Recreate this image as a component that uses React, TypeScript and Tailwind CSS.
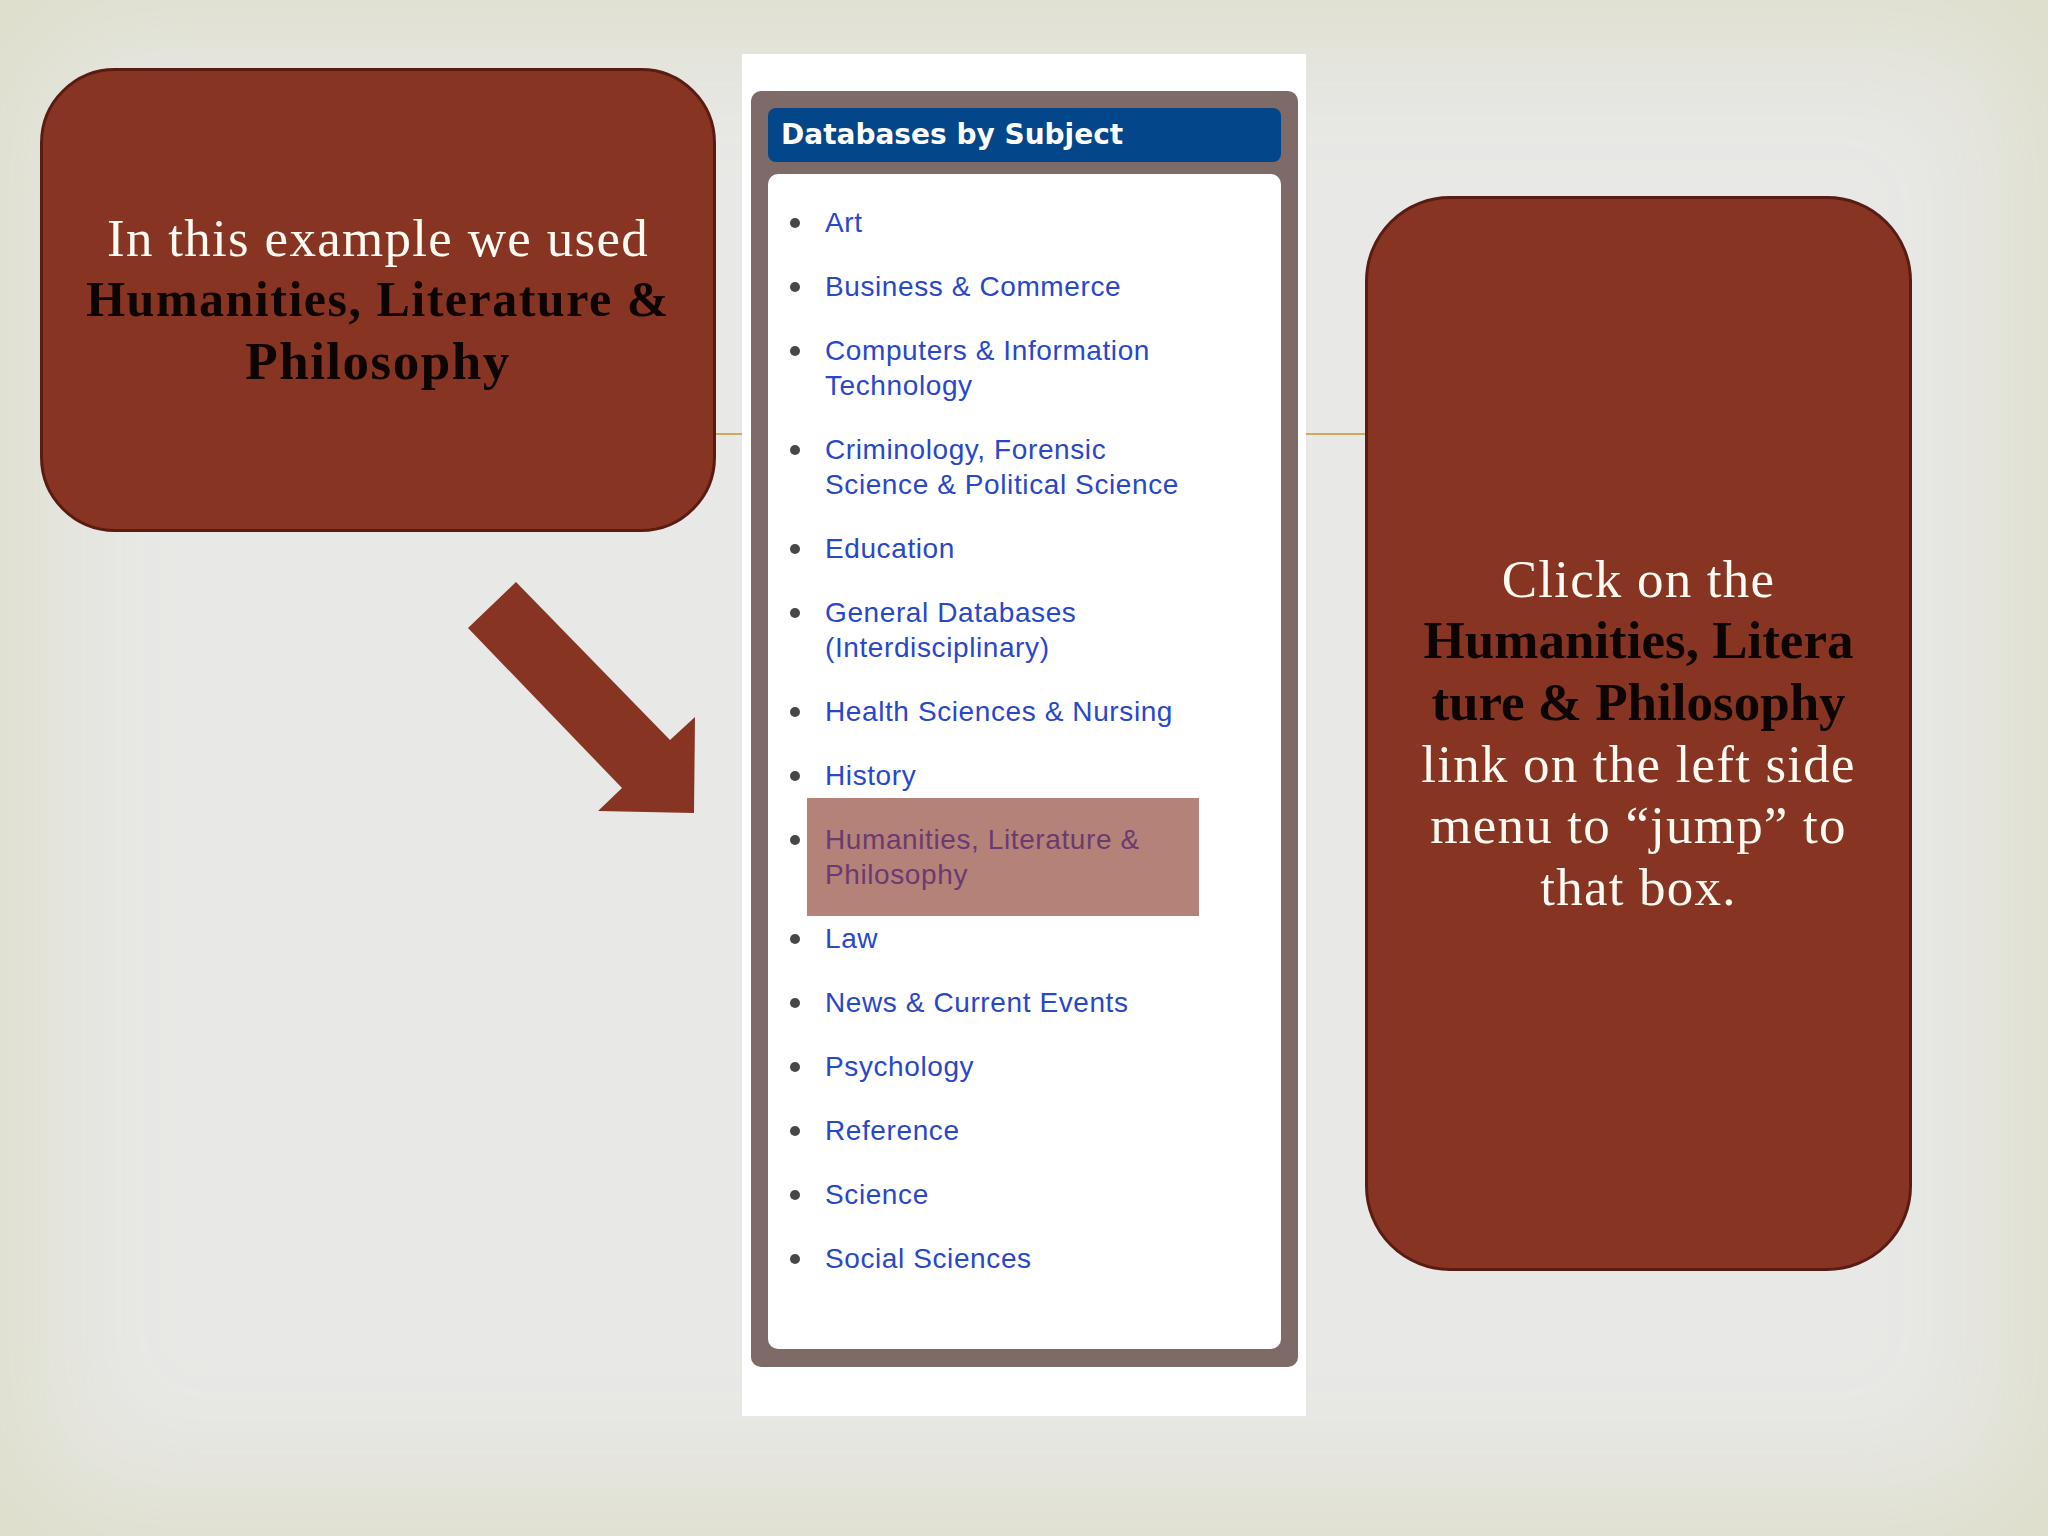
import React from 'react'

interface ISubject {
    lines: string[];
    active?: boolean;
}

const subjects: ISubject[] = [
    { lines: ['Art'] },
    { lines: ['Business & Commerce'] },
    { lines: ['Computers & Information', 'Technology'] },
    { lines: ['Criminology, Forensic', 'Science & Political Science'] },
    { lines: ['Education'] },
    { lines: ['General Databases', '(Interdisciplinary)'] },
    { lines: ['Health Sciences & Nursing'] },
    { lines: ['History'] },
    { lines: ['Humanities, Literature &', 'Philosophy'], active: true },
    { lines: ['Law'] },
    { lines: ['News & Current Events'] },
    { lines: ['Psychology'] },
    { lines: ['Reference'] },
    { lines: ['Science'] },
    { lines: ['Social Sciences'] },
]

const SubjectMenu = () => {
    return (
        <div className='mt-[54px] flex h-[1362px] w-[564px] flex-col bg-white pt-[37px] pl-[9px] pr-[8px] pb-[49px]'>
            <div className='flex flex-1 flex-col gap-[12px] rounded-[10px] bg-[#7e6a67] px-[17px] pt-[17px] pb-[18px]'>
                <div className="flex h-[54px] items-center rounded-[8px] bg-[#03468a] pl-[13px] font-['DejaVu_Sans',sans-serif] text-[28px] font-bold text-white">
                    Databases by Subject
                </div>
                <div className='flex-1 rounded-[10px] bg-white pt-[31px]'>
                    <ul className="flex flex-col gap-[29px] font-['Liberation_Sans',Arial,sans-serif]">
                        {subjects.map((item, idx) => (
                            <li key={idx} className='flex'>
                                <span className='flex h-[35px] w-[57px] shrink-0 items-center pl-[22px]'>
                                    <span className='h-[10px] w-[10px] rounded-full bg-[#474747]'></span>
                                </span>
                                <div className={item.active
                                    ? 'relative -my-[24px] -ml-[18px] w-[392px] whitespace-nowrap bg-[#b5827a] py-[24px] pl-[18px] text-[28px] leading-[35px] tracking-[0.6px] text-[#6b3a6e]'
                                    : 'whitespace-nowrap text-[28px] leading-[35px] tracking-[0.6px] text-[#2847c9]'}>
                                    {item.lines.map((line, i) => (
                                        <div key={i}>{line}</div>
                                    ))}
                                </div>
                            </li>
                        ))}
                    </ul>
                </div>
            </div>
        </div>
    )
}

export default function App() {
    return (
        <div className='relative h-[1536px] w-[2048px] overflow-hidden bg-[#e8e8e6] shadow-[inset_0_0_140px_30px_#dcddc8]'>
            <div className="flex items-start pl-[40px] font-['Liberation_Serif',serif]">
                {/* left note + arrow */}
                <div className='mt-[68px] flex w-[676px] flex-col'>
                    <div className='flex h-[464px] flex-col items-center justify-center rounded-[75px] border-[3px] border-[#5a1c12] bg-[#873422] text-center'>
                        <div className='text-[53px] leading-[61.5px] tracking-[1.3px] text-[#fffaf2]'>In this example we used</div>
                        <div className='text-[50px] font-bold leading-[61.5px] tracking-[1.5px] text-[#0c0504]'>Humanities, Literature &amp;</div>
                        <div className='text-[53px] font-bold leading-[61.5px] tracking-[1.5px] text-[#0c0504]'>Philosophy</div>
                    </div>
                    <svg className='ml-[420px] mt-[43px] block' width='240' height='245' viewBox='460 575 240 245'>
                        <polygon points='468,628 516,582 670,740 695,717 694,813 598,811 622,788' fill='#873422' />
                    </svg>
                </div>

                <div className='mt-[433px] h-[2px] w-[26px] bg-[#d6a65a]'></div>

                <SubjectMenu />

                <div className='mt-[433px] h-[2px] w-[59px] bg-[#d6a65a]'></div>

                {/* right note */}
                <div className='mt-[196px] flex h-[1075px] w-[547px] flex-col items-center justify-center rounded-[85px] border-[3px] border-[#5a1c12] bg-[#873422] text-center text-[53px] leading-[61.6px]'>
                    <div className='tracking-[1.2px] text-[#fffaf2]'>Click on the</div>
                    <div className='font-bold text-[#0c0504]'>Humanities, Litera</div>
                    <div className='font-bold text-[#0c0504]'>ture &amp; Philosophy</div>
                    <div className='tracking-[1.2px] text-[#fffaf2]'>link on the left side</div>
                    <div className='tracking-[1.2px] text-[#fffaf2]'>menu to “jump” to</div>
                    <div className='tracking-[1.2px] text-[#fffaf2]'>that box.</div>
                </div>
            </div>
        </div>
    )
}
